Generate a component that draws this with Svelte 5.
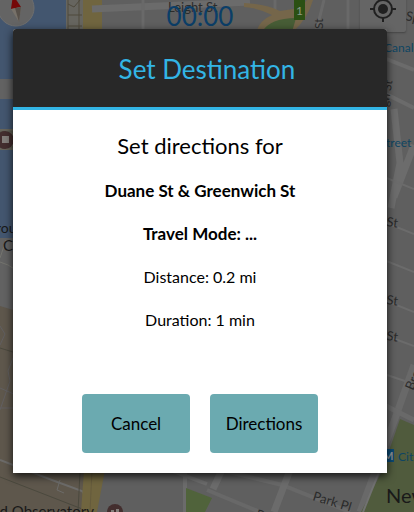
<script>
  const place = 'Duane St & Greenwich St';
  const details = [
    { label: 'Distance', value: '0.2 mi' },
    { label: 'Duration', value: '1 min' }
  ];
  let timer = $state('00:00');
  let mode = $state('...');
</script>

<main class="screen">
  <svg class="map" viewBox="0 0 414 512" preserveAspectRatio="xMidYMid slice" aria-hidden="true">
    <rect width="414" height="512" fill="#5f5f5f" />
    <path d="M0 0H66V240H0Z" fill="#43566f" />
    <path d="M0 79H20V99H0Z" fill="#626262" />
    <path d="M0 129H20V150H0Z" fill="#66645a" />
    <path d="M0 132H20M0 147H20" stroke="#55564b" fill="none" />
    <path d="M0 238H20V310H0Z" fill="#626262" />
    <path d="M0 306L20 312V460L84 470V512H0Z" fill="#5e574c" />
    <path d="M0 262Q8 264 16 270M0 258L6 240" stroke="#74746e" fill="none" />
    <path d="M66 0H83V32H66Z" fill="#66655f" />
    <path d="M68 0V32M79 0V32M68 15H82M68 4L74 7L80 0M68 26H82" stroke="#4e4a3d" fill="none" />
    <path d="M83 0H102V32H83Z" fill="#70653f" />
    <path d="M92 9L250 2" stroke="#6b6b6b" stroke-width="7" />
    <path d="M143 0V32M275 0V32M324 0L316 32M348 0V32" stroke="#696969" stroke-width="3" />
    <path d="M244 3Q266 4 280 11L300 8L307 0H313Q308 18 293 32H256Q260 20 272 15Q259 8 244 7Z" fill="#75664a" />
    <path d="M262 32Q270 18 296 18L292 32Z" fill="#475d36" />

    <path d="M0 326L5 334L0 345M13 358L8 371L10 381L0 410M0 388L16 395M0 408H15" stroke="#615f60" fill="none" />
    <path d="M0 348L16 353" stroke="#4b493e" />
    <path d="M0 460L52 480L82 491L96 512" stroke="#6c6b69" stroke-width="2" fill="none" />
    <path d="M0 477L90 512M80 472L78 512" stroke="#4b493e" fill="none" />
    <path d="M60 480L57 490L64 493" stroke="#6c6b69" fill="none" />
    <path d="M84 470H105L97 512H81Z" fill="#70653f" />
    <path d="M92 470L90 512" stroke="#655b3c" />
    <path d="M170 470L207 484M185 472V512" stroke="#6b6b6b" stroke-width="4" />
    <path d="M186 488L212 498L205 512H186Z" fill="#50633b" />
    <path d="M207 490L260 512M225 471L282 485L350 512" stroke="#686868" stroke-width="4" fill="none" />
    <path d="M290 470L274 512M221 472L213 489" stroke="#6b6b6b" stroke-width="7" />

    <path d="M384 58L414 70M384 93L414 108" stroke="#6b6b6b" stroke-width="4" />
    <path d="M394 109L400 163L391 208M414 145L394 197" stroke="#6c6c6c" stroke-width="7" fill="none" />
    <path d="M384 177L414 189M384 222L414 234M384 260L414 272M384 300L414 312M384 335L414 346M384 374L414 384" stroke="#6b6b6b" stroke-width="2" />
    <path d="M414 365L396 416L360 512" stroke="#696969" stroke-width="7" fill="none" />
    <path d="M400 419L414 425V512H361L382 471Z" fill="#505b3d" />
    <path d="M384 405L414 420" stroke="#696969" stroke-width="5" />
    <path d="M379 472L363 512" stroke="#717171" stroke-width="2" />

    <g class="street">
      <text x="168" y="12" font-size="13">Leight St</text>
      <text x="323" y="29" font-size="12" transform="rotate(-90 323 29)">St</text>
      <text x="405" y="20" font-size="13" transform="rotate(12 405 20)">Sp</text>
      <text x="388" y="107" font-size="12" transform="rotate(-80 388 107)">gh St</text>
      <text x="386" y="226" font-size="13" transform="rotate(8 386 226)">St</text>
      <text x="386" y="304" font-size="13" transform="rotate(8 386 304)">St</text>
      <text x="386" y="340" font-size="13" transform="rotate(8 386 340)">St</text>
      <text x="413" y="391" font-size="13" transform="rotate(-66 413 391)">Bro</text>
      <text x="312" y="500" font-size="13" transform="rotate(17 312 500)">Park Pl</text>
      <text x="255" y="518" font-size="13" transform="rotate(17 255 518)">B</text>
    </g>
    <g class="place">
      <text x="-4" y="233" font-size="14">roun</text>
      <text x="3" y="251" font-size="15">C</text>
      <text x="-4" y="517" font-size="15">ld Observatory</text>
      <text x="386" y="503" font-size="20">New</text>
    </g>
    <g class="station">
      <text x="384" y="52" font-size="12">Canal</text>
      <text x="386" y="147" font-size="12">treet</text>
      <text x="398" y="461" font-size="12">City</text>
      <rect x="382" y="449" width="12" height="13" fill="#0c4972" />
      <text x="383" y="460" font-size="11" class="badge">M</text>
    </g>
    <rect x="294" y="0" width="11" height="20" fill="#2b5013" />
    <text x="296" y="15" font-size="12" fill="#8d9985">1</text>
    <circle cx="5" cy="140" r="9" fill="#432e2e" />
    <rect x="2" y="136" width="7" height="7" fill="#827d79" />
    <circle cx="115" cy="512" r="8" fill="#432e2e" />
    <path d="M111 510H114V512H111ZM116 509H119V512H116Z" fill="#827d79" />
  </svg>

  <svg class="compass" viewBox="0 0 38 38" role="img" aria-label="Compass">
    <circle cx="19" cy="19" r="18" fill="#646464" stroke="#6e6e6e" />
    <path d="M14 20L16 6L24 18Z" fill="#750808" />
    <path d="M14 20L24 18L22 33Z" fill="#777169" />
    <path d="M18 19L24 18L22 33Z" fill="#575049" />
  </svg>
  <output class="timer">{timer}</output>
  <button class="locate" type="button" aria-label="My location">
    <svg viewBox="0 0 28 28" aria-hidden="true">
      <circle cx="14" cy="14" r="9" fill="none" stroke="#202020" stroke-width="2" />
      <circle cx="14" cy="14" r="5" fill="#202020" />
      <path d="M14 1V5M14 23V27M1 14H5M23 14H27" stroke="#202020" stroke-width="2" />
    </svg>
  </button>

  <div class="dialog" role="dialog" aria-modal="true" aria-labelledby="dialog-title">
    <header><h1 id="dialog-title">Set Destination</h1></header>
    <div class="body">
      <h2>Set directions for</h2>
      <p class="strong">{place}</p>
      <p class="strong">Travel Mode: {mode}</p>
      {#each details as item}
        <p>{item.label}: {item.value}</p>
      {/each}
    </div>
    <div class="actions">
      <button type="button">Cancel</button>
      <button type="button">Directions</button>
    </div>
  </div>
</main>

<style>
  :global(body) {
    background: #5f5f5f;
  }
  .screen {
    position: relative;
    box-sizing: border-box;
    display: flex;
    align-items: center;
    min-height: 100vh;
    padding: 29px 27px 39px 13px;
    overflow: hidden;
    font-family: Lato, 'Open Sans', sans-serif;
  }
  .map {
    position: absolute;
    inset: 0;
    width: 100%;
    height: 100%;
  }
  .street {
    fill: #2b2b2b;
  }
  .place {
    fill: #191919;
  }
  .station {
    fill: #0e4562;
  }
  .badge {
    fill: #8b9297;
    font-weight: 700;
  }
  .compass {
    position: absolute;
    top: -11px;
    left: -3px;
    width: 38px;
    height: 38px;
  }
  .timer {
    position: absolute;
    top: 0;
    left: 0;
    right: 14px;
    text-align: center;
    font-size: 26px;
    line-height: 32px;
    color: #0b3e68;
  }
  .locate {
    position: absolute;
    top: -14px;
    right: 8px;
    display: flex;
    align-items: flex-end;
    justify-content: center;
    width: 46px;
    height: 46px;
    padding: 0 0 9px;
    border: 0;
    border-radius: 2px;
    background: #656565;
    box-shadow: 0 1px 2px #444;
  }
  .locate svg {
    width: 28px;
    height: 28px;
  }
  .dialog {
    position: relative;
    flex: 1;
    overflow: hidden;
    border-radius: 3px 3px 0 0;
    background: #fff;
    color: #000;
    text-align: center;
    box-shadow: 0 3px 9px rgba(0, 0, 0, 0.8);
  }
  header {
    padding: 20px 0 18px 14px;
    border-bottom: 3px solid #33b5e5;
    background: #282828;
  }
  h1,
  h2,
  p {
    margin: 0;
    font-weight: 400;
  }
  h1 {
    font-size: 26px;
    line-height: 40px;
    color: #33b5e5;
  }
  .body {
    display: flex;
    flex-direction: column;
    gap: 19px;
    padding: 22px 0 62px;
  }
  h2 {
    font-size: 22px;
    line-height: 28px;
  }
  p {
    font-size: 16px;
    line-height: 24px;
  }
  .strong {
    font-size: 17px;
    font-weight: 700;
  }
  .actions {
    display: flex;
    justify-content: center;
    gap: 20px;
    padding: 0 0 20px;
  }
  .actions button {
    width: 108px;
    height: 59px;
    padding: 0;
    border: 0;
    border-radius: 4px;
    background: #6baab0;
    color: #000;
    font: inherit;
    font-size: 17px;
  }
</style>
